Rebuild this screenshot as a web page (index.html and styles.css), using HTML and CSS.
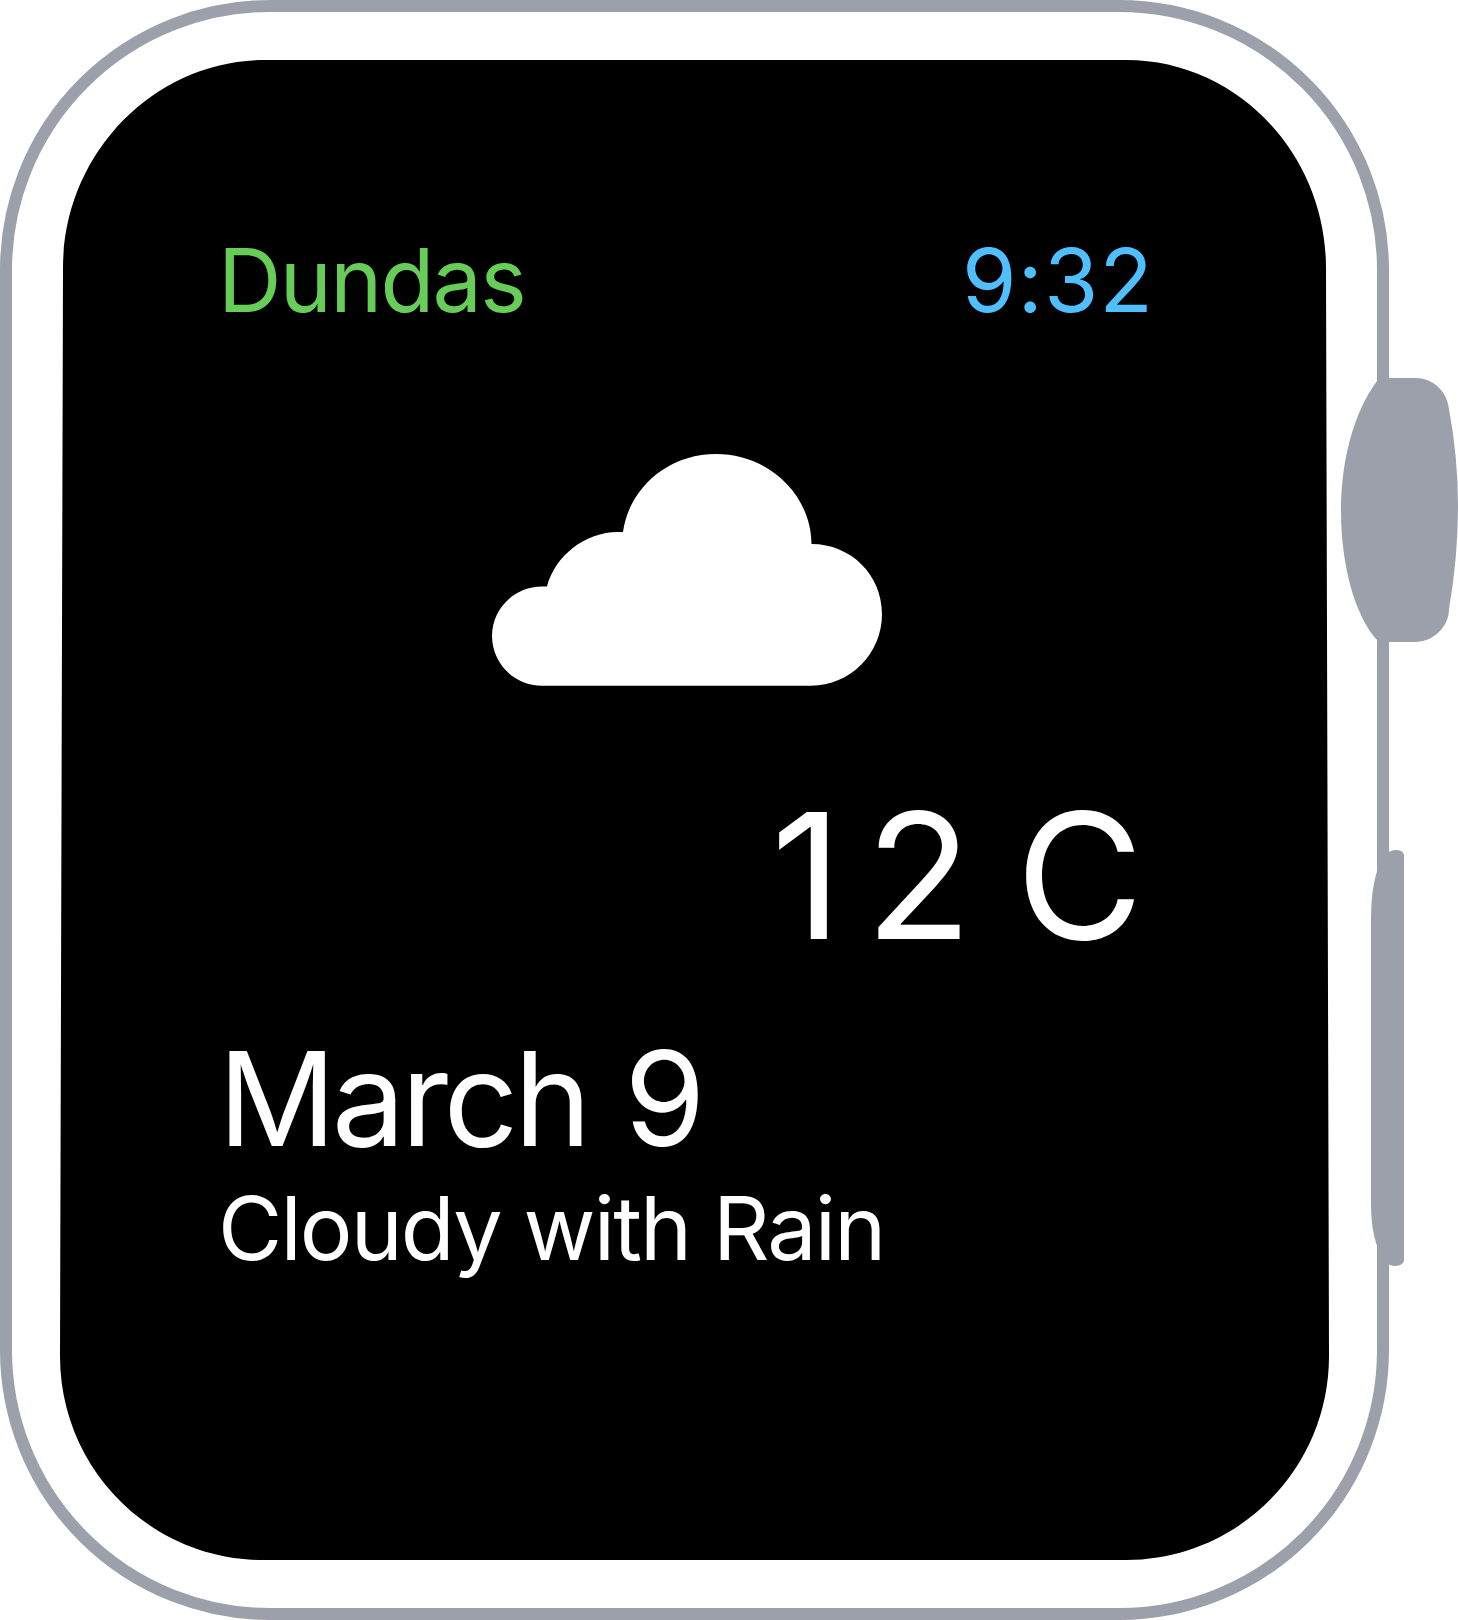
FILE: index.html
```html
<!DOCTYPE html>
<html lang="en">
<head>
<meta charset="utf-8">
<title>Weather watch face</title>
<link rel="stylesheet" href="styles.css">
</head>
<body>
<div class="watch">
  <svg class="hardware" viewBox="0 0 1458 1620" aria-hidden="true">
    <rect class="case" x="6" y="6" width="1377" height="1608" rx="264"/>
    <path class="glass" d="M265 60H1126C1237 60 1326 154 1326 268L1329 1356C1329 1469 1238 1560 1126 1560H263C151 1560 60 1469 60 1356L63 268C63 154 154 60 265 60Z"/>
    <path class="metal" d="M1377 381C1354 412 1341 460 1341 511C1341 565 1355 616 1377 640L1380 642H1415C1433 642 1449 627 1449 609Q1458 557 1458 506Q1458 457 1449 409C1447 391 1433 378 1415 378H1380Z"/>
    <path class="metal" d="M1377 871Q1371 890 1371 919V1204Q1371 1229 1377 1246L1389 1264.500Q1392 1266 1396 1266Q1404 1265 1404 1260V855Q1403 850 1396 850Q1392 850 1389 852Z"/>
  </svg>
  <main class="screen">
    <header class="status">
      <span class="city">Dundas</span>
      <time class="time">9:32</time>
    </header>
    <svg class="cloud" viewBox="492 454 390 232" role="img" aria-label="Cloudy">
      <path d="M542 685.700C514 685.700 492 663 492 636C492 609 514 586.500 542 586.500H547C555 556 585 532 618 532H623C629 488 668 454 716 454C768 454 811 494 811.500 544C851 544 882 575 882 614C882 654 850 685.700 811 685.700Z"/>
    </svg>
    <div class="temperature"><span class="tens">1</span>2 C</div>
    <div class="date">March 9</div>
    <div class="summary">Cloudy with Rain</div>
  </main>
</div>
</body>
</html>
```
FILE: styles.css
```css
body {
  margin: 0;
  background: #fff;
}

.watch {
  position: relative;
  width: 1458px;
  height: 1620px;
  overflow: hidden;
  font-family: Inter, "Liberation Sans", sans-serif;
}

.hardware {
  position: absolute;
  inset: 0;
  width: 1458px;
  height: 1620px;
}

.case {
  fill: #fff;
  stroke: #9ca0ab;
  stroke-width: 12;
}

.glass {
  fill: #000;
}

.metal {
  fill: #9ca0ab;
}

.screen {
  position: relative;
  display: flex;
  flex-direction: column;
  box-sizing: border-box;
  width: 1389px;
  height: 1620px;
  padding: 236px 238px 0 218px;
  color: #fff;
  line-height: 1;
  white-space: nowrap;
}

.status {
  display: flex;
  justify-content: space-between;
  height: 88px;
  font-size: 88px;
}

.city {
  color: #68cc59;
  letter-spacing: -1.7px;
}

.time {
  margin-right: -3px;
  color: #50bfff;
  letter-spacing: 1px;
}

.cloud {
  width: 390px;
  height: 232px;
  margin: 130px 0 0 274px;
  fill: #fff;
}

.temperature {
  margin-top: 102px;
  padding-right: 7.5px;
  font-size: 175px;
  text-align: right;
  word-spacing: -5.5px;
}

.tens {
  letter-spacing: 23px;
}

.date {
  margin-top: 70px;
  font-size: 131px;
  letter-spacing: -4.5px;
  word-spacing: 5px;
}

.summary {
  margin-top: 20px;
  font-size: 88px;
  letter-spacing: -1.9px;
}
```
